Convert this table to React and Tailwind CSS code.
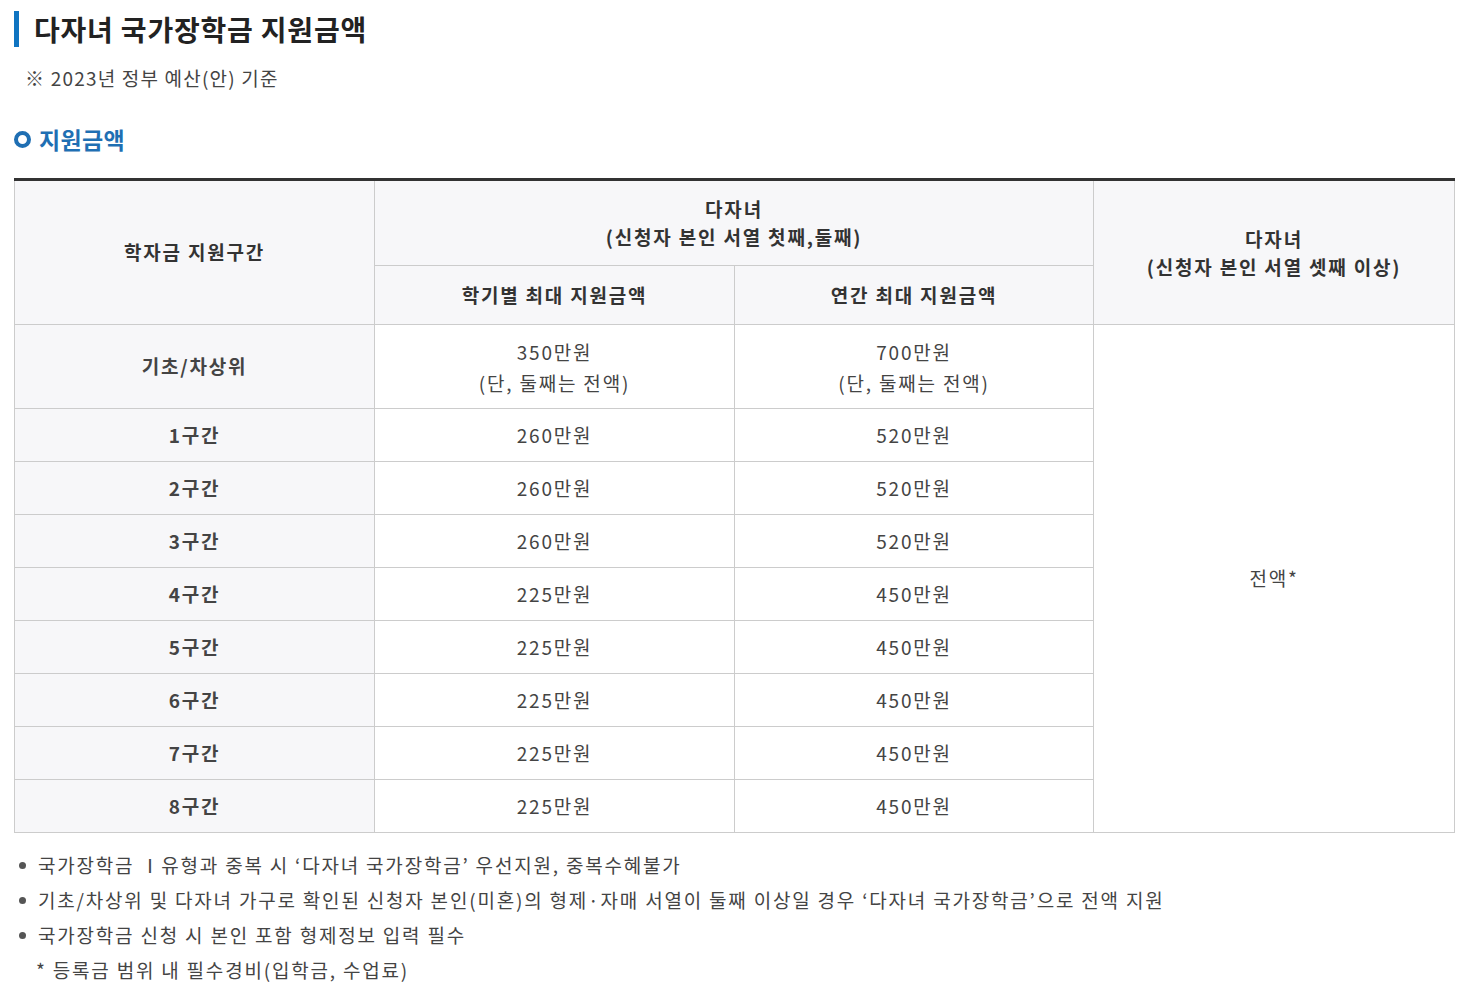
import React from "react";

const rows = [
  { name: "1구간", sem: "260만원", year: "520만원" },
  { name: "2구간", sem: "260만원", year: "520만원" },
  { name: "3구간", sem: "260만원", year: "520만원" },
  { name: "4구간", sem: "225만원", year: "450만원" },
  { name: "5구간", sem: "225만원", year: "450만원" },
  { name: "6구간", sem: "225만원", year: "450만원" },
  { name: "7구간", sem: "225만원", year: "450만원" },
  { name: "8구간", sem: "225만원", year: "450만원" },
];

const notes = [
  "국가장학금 Ⅰ유형과 중복 시 ‘다자녀 국가장학금’ 우선지원, 중복수혜불가",
  "기초/차상위 및 다자녀 가구로 확인된 신청자 본인(미혼)의 형제·자매 서열이 둘째 이상일 경우 ‘다자녀 국가장학금’으로 전액 지원",
  "국가장학금 신청 시 본인 포함 형제정보 입력 필수",
];

const th = "border border-[#cccccc] bg-[#f7f7f9] font-bold text-[#333333] text-center align-middle";
const td = "border border-[#cccccc] text-[#444444] text-center align-middle";

const App = () => {
  return (
    <div
      className="w-[1463px] bg-white px-[14px] pt-[11px] text-[19px] tracking-[1.8px]"
      style={{ fontFamily: '"Noto Sans CJK KR", "Noto Sans", sans-serif' }}
    >
      {/* Page title */}
      <div className="flex items-center h-[36px]">
        <div className="w-[5px] h-[36px] bg-[#0f74c1]" />
        <h1 className="ml-[15px] text-[28px] font-bold text-[#222222] leading-none tracking-[0.8px]">
          다자녀 국가장학금 지원금액
        </h1>
      </div>
      <p className="mt-[21px] ml-[11px] text-[19px] text-[#444444] leading-none tracking-[1.2px]">
        ※ 2023년 정부 예산(안) 기준
      </p>

      {/* Section heading */}
      <div className="mt-[38px] flex items-center h-[28px]">
        <span className="w-[17px] h-[17px] rounded-full border-[4px] border-[#1f6fb3] bg-white" />
        <h2 className="ml-[8px] text-[23px] font-bold text-[#1f6fb3] leading-none tracking-[0.3px]">지원금액</h2>
      </div>

      {/* Table */}
      <table className="mt-[25px] w-[1440px] border-collapse table-fixed">
        <colgroup>
          <col className="w-[360px]" />
          <col className="w-[360px]" />
          <col className="w-[359px]" />
          <col className="w-[361px]" />
        </colgroup>
        <thead>
          <tr className="h-[86px]">
            <th rowSpan={2} className={th + " border-t-[3px] border-t-[#333333]"}>학자금 지원구간</th>
            <th colSpan={2} className={th + " border-t-[3px] border-t-[#333333] leading-[28px]"}>
              다자녀
              <br />
              (신청자 본인 서열 첫째,둘째)
            </th>
            <th rowSpan={2} className={th + " border-t-[3px] border-t-[#333333] leading-[28px]"}>
              다자녀
              <br />
              (신청자 본인 서열 셋째 이상)
            </th>
          </tr>
          <tr className="h-[59px]">
            <th className={th}>학기별 최대 지원금액</th>
            <th className={th}>연간 최대 지원금액</th>
          </tr>
        </thead>
        <tbody>
          <tr className="h-[84px]">
            <td className={td + " bg-[#f7f7f9] font-bold text-[#333333]"}>기초/차상위</td>
            <td className={td + " leading-[31px]"}>
              350만원
              <br />
              (단, 둘째는 전액)
            </td>
            <td className={td + " leading-[31px]"}>
              700만원
              <br />
              (단, 둘째는 전액)
            </td>
            <td rowSpan={9} className={td}>
              전액*
            </td>
          </tr>
          {rows.map((row) => (
            <tr key={row.name} className="h-[53px]">
              <td className={td + " bg-[#f7f7f9] font-bold text-[#333333]"}>{row.name}</td>
              <td className={td}>{row.sem}</td>
              <td className={td}>{row.year}</td>
            </tr>
          ))}
        </tbody>
      </table>

      {/* Notes */}
      <ul className="mt-[15px] text-[#444444]">
        {notes.map((note) => (
          <li key={note} className="flex items-center h-[35px]">
            <span className="w-[7px] h-[7px] rounded-full bg-[#555555] ml-[5px] mr-[12px]" />
            <span>{note}</span>
          </li>
        ))}
        <li className="flex items-center h-[35px] pl-[22px]">* 등록금 범위 내 필수경비(입학금, 수업료)</li>
      </ul>
    </div>
  );
};

export default App;
